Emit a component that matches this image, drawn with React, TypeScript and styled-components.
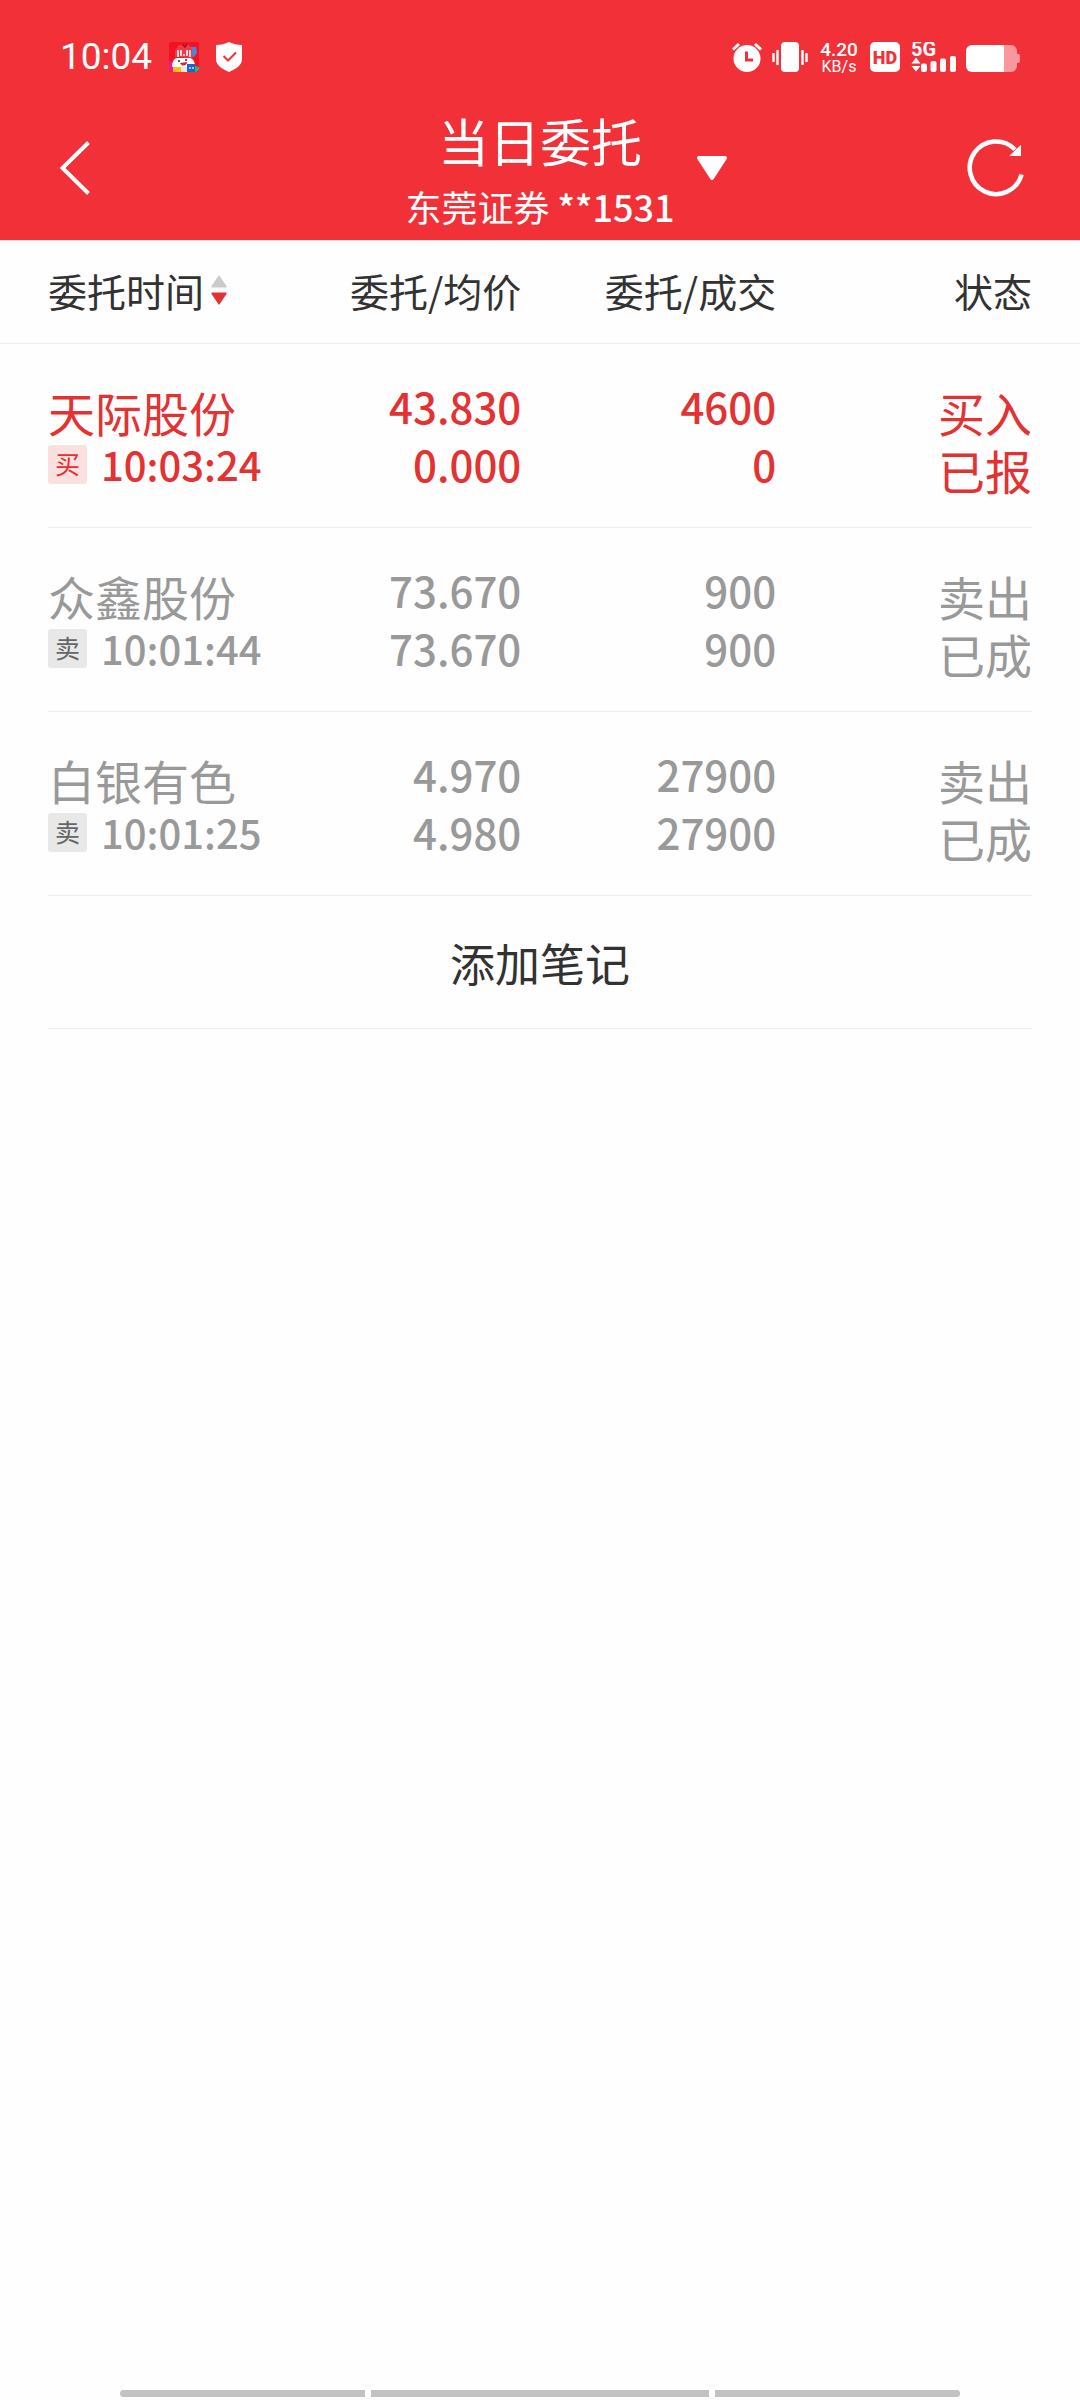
import React from "react";
import styled, { createGlobalStyle } from "styled-components";

const RED = "#f23038";
const CJK = '"Noto Sans CJK SC", "Noto Sans", sans-serif';

const GlobalStyle = createGlobalStyle`
  * { box-sizing: border-box; }
  body {
    margin: 0;
    background: #fefefe;
    color: #323232;
    font-family: ${CJK};
  }
  button {
    margin: 0;
    padding: 0;
    border: 0;
    background: none;
    color: inherit;
    font: inherit;
    cursor: pointer;
  }
  svg { display: block; flex: none; }
`;

const Page = styled.div`
  display: flex;
  flex-direction: column;
  min-height: 100vh;
`;

const Header = styled.header`
  border-bottom: 1px solid #ffdcde;
  background: ${RED};
  color: #fff;
`;

const StatusBar = styled.div`
  display: flex;
  align-items: center;
  justify-content: space-between;
  height: 96px;
  padding: 18px 60px 0;
`;

const StatusGroup = styled.div<{ $gap: number }>`
  display: flex;
  align-items: center;
  gap: ${(p) => p.$gap}px;
`;

const Clock = styled.time`
  font: 400 37px/40px Roboto, sans-serif;
`;

const Speed = styled.div`
  width: 42px;
  padding-top: 2px;
  text-align: center;
  font: 500 19px/18px Roboto, sans-serif;
  white-space: nowrap;
`;

const SpeedUnit = styled.div`
  font-size: 16px;
  font-weight: 400;
  line-height: 16px;
`;

const NavBar = styled.div`
  display: grid;
  grid-template-columns: 1fr auto 1fr;
  align-items: center;
  height: 144px;
  padding: 0 56px;
`;

const BackButton = styled.button`
  justify-self: start;
`;

const NavRight = styled.div`
  display: flex;
  align-items: center;
  justify-content: space-between;
  padding-left: 22px;
`;

const Titles = styled.div`
  display: flex;
  flex-direction: column;
  gap: 6px;
  padding-bottom: 2px;
  text-align: center;
  white-space: nowrap;
`;

const Title = styled.h1`
  margin: 0;
  font-size: 51px;
  font-weight: 400;
  line-height: 72px;
`;

const Account = styled.p`
  margin: 0;
  font-size: 36px;
  line-height: 48px;
`;

const AccountNumber = styled.span`
  font-weight: 500;
`;

const Orders = styled.table`
  display: block;
  width: 100%;
  line-height: 58px;
`;

const OrdersHead = styled.thead`
  display: block;
  padding: 0 48px;
  border-bottom: 1px solid #ececec;
`;

const OrdersBody = styled.tbody`
  display: block;
  padding: 0 48px;
`;

const columns = "222fr 259fr 259fr 260fr";

const HeadRow = styled.tr`
  display: grid;
  grid-template-columns: ${columns};
  align-items: center;
  height: 102px;
  padding-bottom: 4px;
`;

const HeadCell = styled.th`
  padding: 0;
  font-size: 39px;
  font-weight: 400;
  text-align: right;
  white-space: nowrap;
`;

const SortButton = styled.button`
  display: flex;
  align-items: center;
  gap: 7px;
`;

const OrderRow = styled.tr<{ $pending: boolean }>`
  display: grid;
  grid-template-columns: ${columns};
  padding: 33px 0 34px;
  border-bottom: 1px solid #ececec;
  color: ${(p) => (p.$pending ? "#e43131" : "#999")};
`;

const Cell = styled.td`
  padding: 0;
  text-align: right;
  white-space: nowrap;

  &:first-child { text-align: left; }
`;

const Label = styled.div`
  height: 58px;
  padding-top: 11px;
  font-size: 47px;
  line-height: 47px;
`;

const Figure = styled.div`
  font-size: 42px;
  font-weight: 500;
`;

const TimeLine = styled.div`
  display: flex;
  align-items: center;
  gap: 14px;
  height: 58px;
`;

const SideTag = styled.span<{ $buy: boolean }>`
  flex: none;
  width: 39px;
  height: 39px;
  border-radius: 3px;
  background: ${(p) => (p.$buy ? "#fbe0e0" : "#e8e8e8")};
  color: ${(p) => (p.$buy ? "#e43131" : "#666")};
  font-size: 25px;
  line-height: 37px;
  text-align: center;
`;

const OrderTime = styled.time`
  font-size: 40px;
  font-weight: 500;
`;

const NoteButton = styled.button`
  height: 133px;
  margin: 0 48px;
  border-bottom: 1px solid #ececec;
  font-size: 45px;
`;

const SystemNav = styled.nav`
  display: grid;
  grid-template-columns: 245fr 338fr 245fr;
  gap: 6px;
  margin-top: auto;
  padding: 0 120px 3px;
`;

const NavPill = styled.button`
  height: 7px;
  background: #c2c2c2;

  &:first-child { border-radius: 4px 0 0 4px; }
  &:last-child { border-radius: 0 4px 4px 0; }
`;

const AppIcon = () => (
  <svg width="30" height="30" viewBox="0 0 30 30" aria-hidden="true">
    <rect width="30" height="30" rx="2" fill="#f3121f" />
    <path d="M0 18l5 4v8H2a2 2 0 0 1-2-2z" fill="#f0188a" />
    <path d="M22 5l5 0 1 6-3 4-4-2z" fill="#3c8fe8" />
    <path d="M6 15V9l3-5 4-2 3 2 3-2 4 5 1 9z" fill="#ef3944" />
    <path d="M13 2l3 3 2-3" stroke="#a5101c" strokeWidth="1.5" fill="none" />
    <path d="M3 25c0-5 2-9 5-9h13c4 1 5 5 5 9z" fill="#fff" />
    <path d="M9 8v7M12 8v6M18 8v6M21 8v7" stroke="#fff" strokeWidth="1.6" />
    <path d="M15 12v2" stroke="#fff" strokeWidth="1.5" />
    <path d="M10 18v2M17 17v2" stroke="#333" strokeWidth="1.6" />
    <path d="M11 21l7-1c0 4-5 5-7 1z" fill="#d7262f" />
    <path d="M4 25h8v5H4z" fill="#f9bd17" />
    <path d="M12 25h6v5h-6z" fill="#f4e3dc" />
    <path d="M18 22h8v8h-8z" fill="#1766cf" />
    <path d="M20 26h2M23 26h2" stroke="#cfe8ff" strokeWidth="1.6" />
    <path d="M26 24l4 1v3l-3 2h-1z" fill="#2fb27b" />
  </svg>
);

const ShieldIcon = () => (
  <svg width="26" height="30" viewBox="0 0 26 30" aria-hidden="true">
    <path d="M13 0c4 2 8 3 13 3v14c0 6-6 10-13 13C6 27 0 23 0 17V3c5 0 9-1 13-3z" fill="#fff" />
    <path d="M7.500 14l4.500 4.500 8-8" stroke={RED} strokeWidth="2" fill="none" />
  </svg>
);

const AlarmIcon = () => (
  <svg width="30" height="30" viewBox="0 0 30 30" aria-hidden="true">
    <circle cx="15" cy="16.500" r="13.500" fill="#fff" />
    <path d="M1 7.500L7 2M29 7.500L23 2" stroke="#fff" strokeWidth="3" />
    <path d="M14.500 9.500V18H21" stroke={RED} strokeWidth="3" fill="none" />
  </svg>
);

const VibrateIcon = () => (
  <svg width="36" height="30" viewBox="0 0 36 30" aria-hidden="true">
    <rect x="9" width="18" height="30" rx="4" fill="#fff" />
    <path d="M1.500 11v9M34.500 11v9M5.500 8v15M30.500 8v15" stroke="#fff" strokeWidth="2.400" />
  </svg>
);

const HdIcon = () => (
  <svg width="30" height="30" viewBox="0 0 30 30" role="img" aria-label="HD">
    <rect width="30" height="30" rx="5" fill="#fff" />
    <text x="15" y="21.500" textAnchor="middle" fontFamily="Roboto, sans-serif" fontSize="18" fontWeight="900" fill={RED}>
      HD
    </text>
  </svg>
);

const SignalIcon = () => (
  <svg width="46" height="30" viewBox="0 0 46 30" role="img" aria-label="5G">
    <text x="1" y="14" fontFamily="Roboto, sans-serif" fontSize="20" fontWeight="700" fill="#fff">
      5G
    </text>
    <path d="M1.500 21.500l4.500-6 4.500 6zM1.500 24h9L6 29.500z" fill="#fff" />
    <rect x="11" y="21.500" width="6" height="8.500" rx="2" fill="#fff" />
    <rect x="20.500" y="19" width="6" height="11" rx="2" fill="#fff" />
    <rect x="30" y="16.500" width="6" height="13.500" rx="2" fill="#fff" />
    <rect x="40" y="14" width="6" height="16" rx="2" fill="#fff" />
  </svg>
);

const BatteryIcon = () => (
  <svg width="54" height="30" viewBox="0 0 54 30" aria-hidden="true">
    <path d="M38 3h7a6 6 0 0 1 6 6v3h1a2 2 0 0 1 2 2v5a2 2 0 0 1-2 2h-1v3a6 6 0 0 1-6 6h-7z" fill="#fff" fillOpacity="0.500" />
    <path d="M38 3H6a6 6 0 0 0-6 6v15a6 6 0 0 0 6 6h32z" fill="#fff" />
  </svg>
);

const BackIcon = () => (
  <svg width="34" height="54" viewBox="-4 0 34 54" aria-hidden="true">
    <path d="M28.500 1.500L2.500 27l26 25.500" stroke="#fff" strokeWidth="4" fill="none" />
  </svg>
);

const CaretIcon = () => (
  <svg width="30" height="30" viewBox="0 0 30 30" aria-hidden="true">
    <path d="M2 5h26L15 25z" fill="#fff" stroke="#fff" strokeWidth="4" strokeLinejoin="round" />
  </svg>
);

const RefreshIcon = () => (
  <svg width="58" height="58" viewBox="0 0 58 58" aria-hidden="true">
    <path d="M49 10.500A26.300 26.300 0 1 0 55.500 35.500" stroke="#fff" strokeWidth="4.600" fill="none" />
    <path d="M55 5.700V17H43.300z" fill="#fff" />
  </svg>
);

const SortIcon = () => (
  <svg width="16" height="30" viewBox="0 0 16 30" aria-hidden="true">
    <path d="M8 0L15.500 11v1.500H0.500V11z" fill="#cbcbcb" />
    <path d="M8 30L15.500 19v-1.500H0.500V19z" fill="#e43131" />
  </svg>
);

type Order = {
  name: string;
  time: string;
  buy: boolean;
  price: string;
  average: string;
  ordered: string;
  filled: string;
  state: string;
};

const orders: Order[] = [
  { name: "天际股份", time: "10:03:24", buy: true, price: "43.830", average: "0.000", ordered: "4600", filled: "0", state: "已报" },
  { name: "众鑫股份", time: "10:01:44", buy: false, price: "73.670", average: "73.670", ordered: "900", filled: "900", state: "已成" },
  { name: "白银有色", time: "10:01:25", buy: false, price: "4.970", average: "4.980", ordered: "27900", filled: "27900", state: "已成" },
];

export default function App() {
  return (
    <Page lang="zh-CN">
      <GlobalStyle />
      <Header>
        <StatusBar>
          <StatusGroup $gap={17}>
            <Clock>10:04</Clock>
            <AppIcon />
            <ShieldIcon />
          </StatusGroup>
          <StatusGroup $gap={10}>
            <AlarmIcon />
            <VibrateIcon />
            <Speed>
              4.20
              <SpeedUnit>KB/s</SpeedUnit>
            </Speed>
            <HdIcon />
            <SignalIcon />
            <BatteryIcon />
          </StatusGroup>
        </StatusBar>
        <NavBar>
          <BackButton aria-label="返回">
            <BackIcon />
          </BackButton>
          <Titles>
            <Title>当日委托</Title>
            <Account>
              东莞证券 <AccountNumber>**1531</AccountNumber>
            </Account>
          </Titles>
          <NavRight>
            <button aria-label="切换账户">
              <CaretIcon />
            </button>
            <button aria-label="刷新">
              <RefreshIcon />
            </button>
          </NavRight>
        </NavBar>
      </Header>
      <Orders>
        <OrdersHead>
          <HeadRow>
            <HeadCell scope="col">
              <SortButton>
                委托时间
                <SortIcon />
              </SortButton>
            </HeadCell>
            <HeadCell scope="col">委托/均价</HeadCell>
            <HeadCell scope="col">委托/成交</HeadCell>
            <HeadCell scope="col">状态</HeadCell>
          </HeadRow>
        </OrdersHead>
        <OrdersBody>
          {orders.map((order) => (
            <OrderRow key={order.time} $pending={order.state === "已报"}>
              <Cell>
                <Label>{order.name}</Label>
                <TimeLine>
                  <SideTag $buy={order.buy}>{order.buy ? "买" : "卖"}</SideTag>
                  <OrderTime>{order.time}</OrderTime>
                </TimeLine>
              </Cell>
              <Cell>
                <Figure>{order.price}</Figure>
                <Figure>{order.average}</Figure>
              </Cell>
              <Cell>
                <Figure>{order.ordered}</Figure>
                <Figure>{order.filled}</Figure>
              </Cell>
              <Cell>
                <Label>{order.buy ? "买入" : "卖出"}</Label>
                <Label>{order.state}</Label>
              </Cell>
            </OrderRow>
          ))}
        </OrdersBody>
      </Orders>
      <NoteButton>添加笔记</NoteButton>
      <SystemNav aria-label="系统导航">
        <NavPill aria-label="最近任务" />
        <NavPill aria-label="主屏幕" />
        <NavPill aria-label="返回上一级" />
      </SystemNav>
    </Page>
  );
}
